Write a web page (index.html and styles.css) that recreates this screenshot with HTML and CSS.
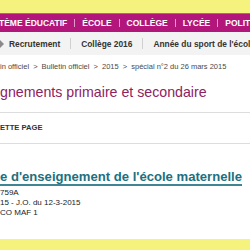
FILE: index.html
```html
<!DOCTYPE html>
<html lang="fr">
<head>
<meta charset="utf-8">
<link rel="stylesheet" href="styles.css">
</head>
<body>
<div class="page">
  <div class="band band-top"></div>
  <nav class="mainnav">
    <span class="mn-item first">TÈME ÉDUCATIF</span>
    <span class="mn-sep"></span>
    <span class="mn-item">ÉCOLE</span>
    <span class="mn-sep"></span>
    <span class="mn-item">COLLÈGE</span>
    <span class="mn-sep"></span>
    <span class="mn-item">LYCÉE</span>
    <span class="mn-sep"></span>
    <span class="mn-item">POLIT</span>
  </nav>
  <nav class="subnav">
    <svg class="sn-arrow" width="6" height="10" viewBox="0 0 6 10"><polygon points="0,0 5,5 0,10" fill="#8a8a8a"/></svg>
    <span class="sn-item">Recrutement</span>
    <span class="sn-sep"></span>
    <span class="sn-item">Collège 2016</span>
    <span class="sn-sep"></span>
    <span class="sn-item">Année du sport de l'écol</span>
  </nav>
  <main class="content">
    <div class="crumbs">in officiel <span class="gt">&gt;</span> Bulletin officiel <span class="gt">&gt;</span> 2015 <span class="gt">&gt;</span> spécial n°2 du 26 mars 2015</div>
    <h1 class="title">gnements primaire et secondaire</h1>
    <div class="tools">ETTE PAGE</div>
    <h2 class="doc-title"><span class="doc-link">e d'enseignement de l'école maternelle</span></h2>
    <div class="meta">
      <div>759A</div>
      <div>15 - J.O. du 12-3-2015</div>
      <div>CO MAF 1</div>
    </div>
  </main>
  <div class="band band-bottom"></div>
</div>
</body>
</html>
```
FILE: styles.css
```css
* { box-sizing: border-box; }
html, body { margin: 0; padding: 0; }
body {
  width: 250px;
  height: 250px;
  overflow: hidden;
  background: #ffffff;
  font-family: "Liberation Sans", Arial, sans-serif;
}
.page {
  width: 250px;
  height: 250px;
  display: flex;
  flex-direction: column;
  overflow: hidden;
}
.band { background: #f5f37e; flex: none; }
.band-top { height: 13px; }
.band-bottom { height: 11px; margin-top: auto; }

.mainnav {
  flex: none;
  height: 19px;
  background: #b2167b;
  border-top: 1px solid #cf4e9f;
  display: flex;
  align-items: center;
  white-space: nowrap;
  overflow: hidden;
  color: #ffffff;
  font-weight: bold;
  font-size: 8.5px;
}
.mn-item { flex: none; }
.mn-item.first { margin-left: -1px; }
.mn-sep {
  flex: none;
  width: 1px;
  height: 8px;
  background: #e39acb;
  margin: 0 7px;
}

.subnav {
  flex: none;
  height: 23px;
  background: #f3f3f3;
  display: flex;
  align-items: center;
  white-space: nowrap;
  overflow: hidden;
  color: #333333;
  font-weight: bold;
  font-size: 8.4px;
}
.sn-arrow { flex: none; margin-left: -1px; margin-right: 4px; }
.sn-item { flex: none; }
.sn-sep {
  flex: none;
  width: 1px;
  height: 11px;
  background: #d0d0d0;
  margin: 0 10px;
}

.content {
  flex: none;
  display: flex;
  flex-direction: column;
}
.crumbs {
  margin-top: 7px;
  font-size: 7.5px;
  line-height: 10px;
  color: #4a4a4a;
  white-space: nowrap;
}
.gt { margin: 0 2px; }
.title {
  margin: 12px 0 0 0;
  font-size: 14.2px;
  line-height: 17px;
  font-weight: normal;
  color: #8d2262;
  white-space: nowrap;
  padding-bottom: 11px;
  border-bottom: 1px solid #dddddd;
}
.tools {
  font-size: 7.6px;
  font-weight: bold;
  color: #333333;
  line-height: 10px;
  padding: 10px 0 10px 0;
  border-bottom: 1px solid #dddddd;
}
.doc-title {
  margin: 26px 0 0 0;
  font-size: 13.1px;
  line-height: 14px;
  font-weight: bold;
  color: #216f80;
  white-space: nowrap;
}
.doc-link {
  display: inline-block;
  border-bottom: 2px solid #3f8594;
}
.meta {
  margin-top: 2px;
  font-size: 8px;
  line-height: 10px;
  color: #222222;
}
```
